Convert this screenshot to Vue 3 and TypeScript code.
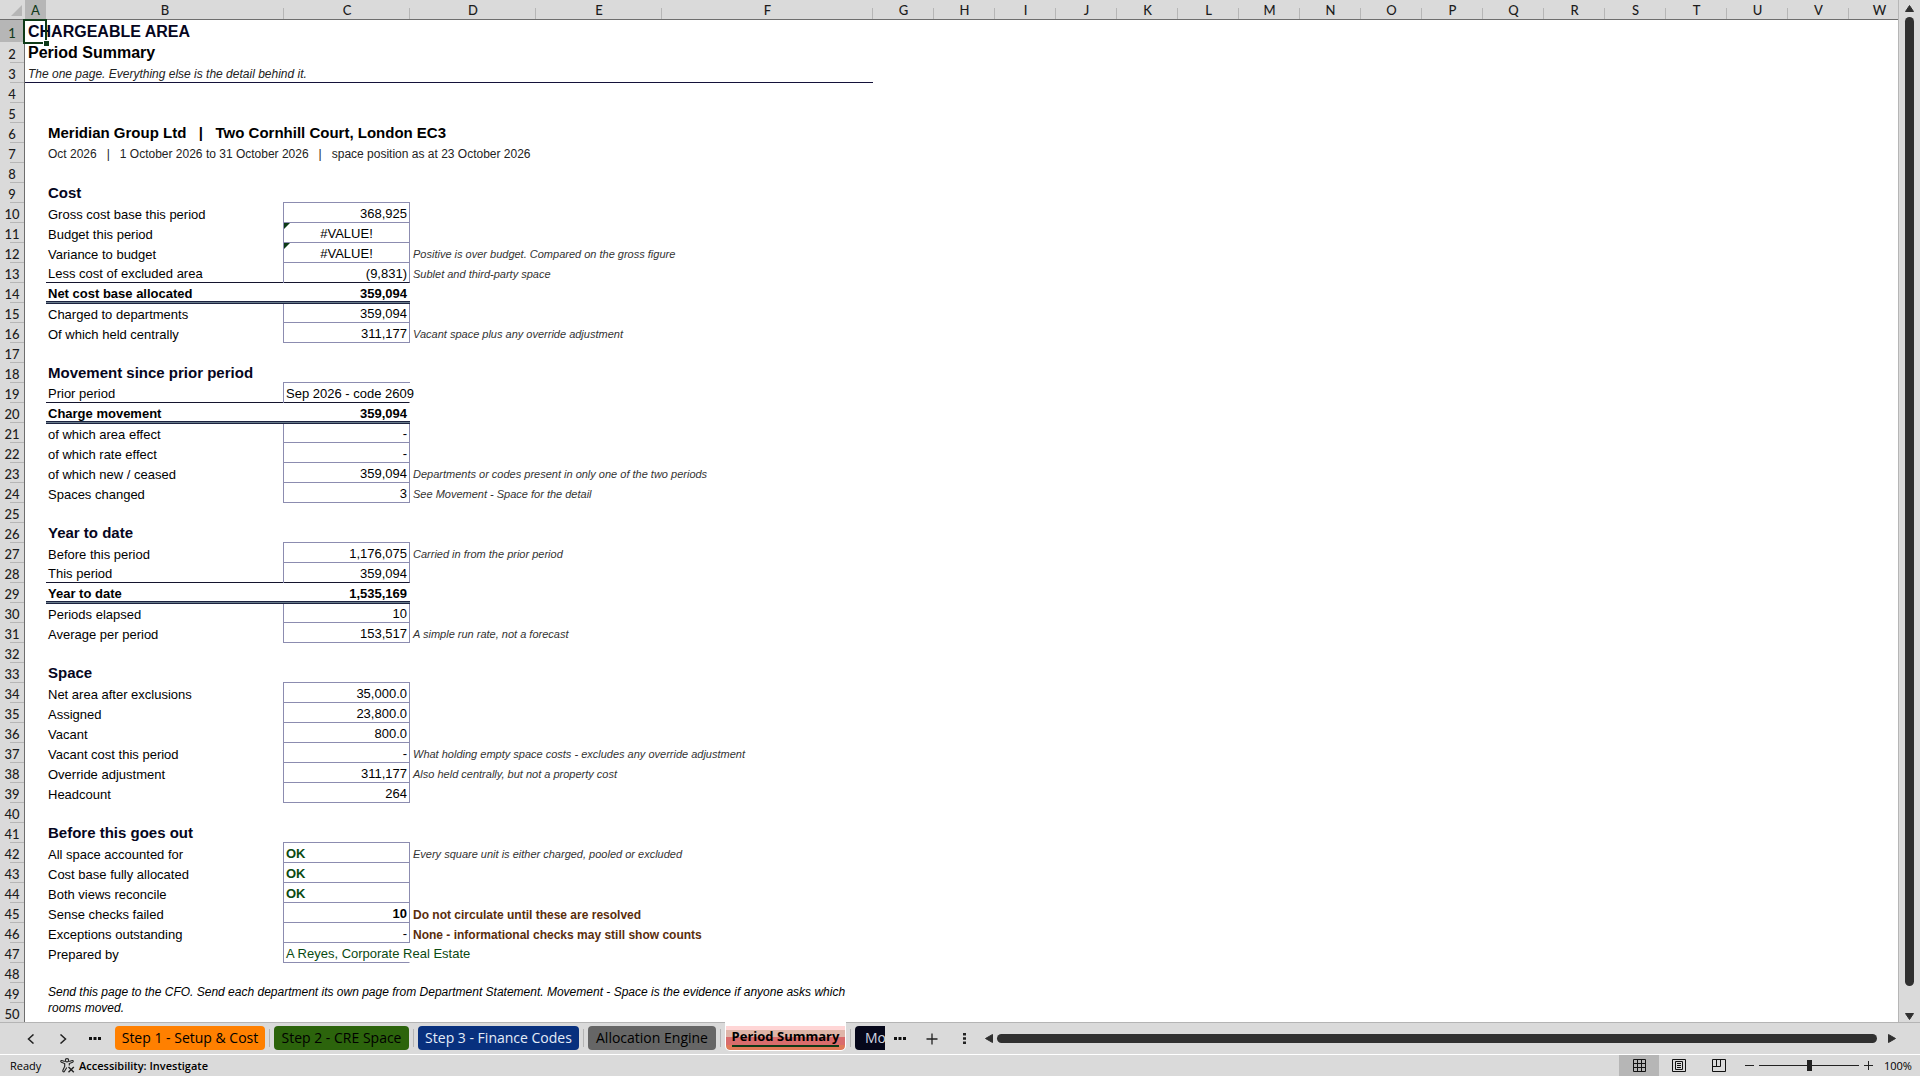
<script setup lang="ts">
interface Row {
  n: number
  kind?: 'title' | 'subtitle' | 'tagline' | 'client' | 'period' | 'section' | 'total' | 'line' | 'closing'
  label?: string
  value?: string
  align?: 'left' | 'center'
  look?: 'ok' | 'link' | 'strong'
  note?: string
  alert?: boolean
  first?: boolean
  open?: boolean
}

const wideColumns = ['D', 'E']
const narrowColumns = 'GHIJKLMNOPQRSTUVW'.split('')

const filled: Row[] = [
  { n: 1, kind: 'title', label: 'CHARGEABLE AREA' },
  { n: 2, kind: 'subtitle', label: 'Period Summary' },
  { n: 3, kind: 'tagline', label: 'The one page. Everything else is the detail behind it.' },
  { n: 6, kind: 'client', label: 'Meridian Group Ltd   |   Two Cornhill Court, London EC3' },
  { n: 7, kind: 'period', label: 'Oct 2026   |   1 October 2026 to 31 October 2026   |   space position as at 23 October 2026' },
  { n: 9, kind: 'section', label: 'Cost' },
  { n: 10, kind: 'line', label: 'Gross cost base this period', value: '368,925', first: true },
  { n: 11, kind: 'line', label: 'Budget this period', value: '#VALUE!', align: 'center' },
  { n: 12, kind: 'line', label: 'Variance to budget', value: '#VALUE!', align: 'center', note: 'Positive is over budget. Compared on the gross figure' },
  { n: 13, kind: 'line', label: 'Less cost of excluded area', value: '(9,831)', note: 'Sublet and third-party space' },
  { n: 14, kind: 'total', label: 'Net cost base allocated', value: '359,094' },
  { n: 15, kind: 'line', label: 'Charged to departments', value: '359,094' },
  { n: 16, kind: 'line', label: 'Of which held centrally', value: '311,177', note: 'Vacant space plus any override adjustment' },
  { n: 18, kind: 'section', label: 'Movement since prior period' },
  { n: 19, kind: 'line', label: 'Prior period', value: 'Sep 2026 - code 2609', align: 'left', first: true, open: true },
  { n: 20, kind: 'total', label: 'Charge movement', value: '359,094' },
  { n: 21, kind: 'line', label: 'of which area effect', value: '-' },
  { n: 22, kind: 'line', label: 'of which rate effect', value: '-' },
  { n: 23, kind: 'line', label: 'of which new / ceased', value: '359,094', note: 'Departments or codes present in only one of the two periods' },
  { n: 24, kind: 'line', label: 'Spaces changed', value: '3', note: 'See Movement - Space for the detail' },
  { n: 26, kind: 'section', label: 'Year to date' },
  { n: 27, kind: 'line', label: 'Before this period', value: '1,176,075', note: 'Carried in from the prior period', first: true },
  { n: 28, kind: 'line', label: 'This period', value: '359,094' },
  { n: 29, kind: 'total', label: 'Year to date', value: '1,535,169' },
  { n: 30, kind: 'line', label: 'Periods elapsed', value: '10' },
  { n: 31, kind: 'line', label: 'Average per period', value: '153,517', note: 'A simple run rate, not a forecast' },
  { n: 33, kind: 'section', label: 'Space' },
  { n: 34, kind: 'line', label: 'Net area after exclusions', value: '35,000.0', first: true },
  { n: 35, kind: 'line', label: 'Assigned', value: '23,800.0' },
  { n: 36, kind: 'line', label: 'Vacant', value: '800.0' },
  { n: 37, kind: 'line', label: 'Vacant cost this period', value: '-', note: 'What holding empty space costs - excludes any override adjustment' },
  { n: 38, kind: 'line', label: 'Override adjustment', value: '311,177', note: 'Also held centrally, but not a property cost' },
  { n: 39, kind: 'line', label: 'Headcount', value: '264' },
  { n: 41, kind: 'section', label: 'Before this goes out' },
  { n: 42, kind: 'line', label: 'All space accounted for', value: 'OK', align: 'left', look: 'ok', note: 'Every square unit is either charged, pooled or excluded', first: true },
  { n: 43, kind: 'line', label: 'Cost base fully allocated', value: 'OK', align: 'left', look: 'ok' },
  { n: 44, kind: 'line', label: 'Both views reconcile', value: 'OK', align: 'left', look: 'ok' },
  { n: 45, kind: 'line', label: 'Sense checks failed', value: '10', look: 'strong', note: 'Do not circulate until these are resolved', alert: true },
  { n: 46, kind: 'line', label: 'Exceptions outstanding', value: '-', note: 'None - informational checks may still show counts', alert: true },
  { n: 47, kind: 'line', label: 'Prepared by', value: 'A Reyes, Corporate Real Estate', align: 'left', look: 'link', open: true },
  {
    n: 49,
    kind: 'closing',
    label:
      'Send this page to the CFO. Send each department its own page from Department Statement. Movement - Space is the evidence if anyone asks which rooms moved.',
  },
]

const rows: Row[] = Array.from({ length: 50 }, (_, i) => filled.find((r) => r.n === i + 1) ?? { n: i + 1 })

const beforeTotal = (n: number) => rows[n]?.kind === 'total'

const tabs = [
  { name: 'Step 1 - Setup & Cost', tone: 'orange' },
  { name: 'Step 2 - CRE Space', tone: 'green' },
  { name: 'Step 3 - Finance Codes', tone: 'blue' },
  { name: 'Allocation Engine', tone: 'grey' },
  { name: 'Period Summary', tone: 'active' },
  { name: 'Mo', tone: 'navy' },
]
</script>

<template>
  <div class="app">
    <main class="work">
      <div class="sheet">
        <table>
          <colgroup>
            <col class="w-head" /><col class="w-a" /><col class="w-b" /><col class="w-c" />
            <col v-for="c in wideColumns" :key="c" class="w-c" />
            <col class="w-f" />
            <col v-for="c in narrowColumns" :key="c" class="w-n" />
          </colgroup>
          <thead>
            <tr>
              <th class="corner"><svg width="11" height="11" viewBox="0 0 11 11"><path d="M11 0V11H0Z" fill="#b6b6b6" /></svg></th>
              <th class="picked" scope="col">A</th>
              <th scope="col">B</th>
              <th scope="col">C</th>
              <th v-for="c in wideColumns" :key="c" scope="col">{{ c }}</th>
              <th scope="col">F</th>
              <th v-for="c in narrowColumns" :key="c" scope="col">{{ c }}</th>
            </tr>
          </thead>
          <tbody>
            <tr v-for="r in rows" :key="r.n" :class="[r.kind, { 'pre-total': beforeTotal(r.n) }]">
              <th scope="row" :class="{ picked: r.n === 1 }">{{ r.n }}</th>
              <template v-if="r.n <= 3">
                <td colspan="6" class="heading">
                  {{ r.label }}
                  <span v-if="r.n === 1" class="cursor"></span>
                </td>
              </template>
              <template v-else-if="r.kind === 'line' || r.kind === 'total'">
                <td></td>
                <td class="label">{{ r.label }}</td>
                <td class="value" :class="[r.align, r.look, { first: r.first, open: r.open }]">
                  <i v-if="r.value === '#VALUE!'" class="flag"></i>{{ r.value }}
                </td>
                <td class="note" :class="{ alert: r.alert }" colspan="3">{{ r.note }}</td>
              </template>
              <template v-else-if="r.kind === 'closing'">
                <td></td>
                <td class="label" colspan="5" rowspan="2">{{ r.label }}</td>
              </template>
              <template v-else-if="r.label">
                <td></td>
                <td class="label" colspan="5">{{ r.label }}</td>
              </template>
            </tr>
          </tbody>
        </table>
      </div>
      <div class="vscroll">
        <svg width="9" height="7" viewBox="0 0 9 7"><path d="M4.5 0.5L8.5 6.5H0.5Z" fill="#303030" stroke="#303030" stroke-linejoin="round" /></svg>
        <div class="thumb"></div>
        <svg width="9" height="7" viewBox="0 0 9 7"><path d="M4.5 6.5L8.5 0.5H0.5Z" fill="#303030" stroke="#303030" stroke-linejoin="round" /></svg>
      </div>
    </main>

    <nav class="tabbar" aria-label="Sheets">
      <div class="arrows">
        <button aria-label="Previous sheet"><svg width="8" height="10" viewBox="0 0 8 10"><path d="M6.5 0.5L1.5 5L6.5 9.5" fill="none" stroke="#222" stroke-width="1.5" /></svg></button>
        <button aria-label="Next sheet"><svg width="8" height="10" viewBox="0 0 8 10"><path d="M1.5 0.5L6.5 5L1.5 9.5" fill="none" stroke="#222" stroke-width="1.5" /></svg></button>
        <button aria-label="More sheets"><svg width="12" height="3" viewBox="0 0 12 3"><path d="M0 0h3v3H0zM4.5 0h3v3h-3zM9 0h3v3H9z" fill="#111" /></svg></button>
      </div>
      <div class="tabs">
        <div v-for="t in tabs" :key="t.name" class="slot" :class="t.tone">
          <button><span>{{ t.name }}</span></button>
        </div>
      </div>
      <div class="tools">
        <button aria-label="All sheets"><svg width="12" height="3" viewBox="0 0 12 3"><path d="M0 0h3v3H0zM4.5 0h3v3h-3zM9 0h3v3H9z" fill="#111" /></svg></button>
        <button aria-label="New sheet"><svg width="12" height="12" viewBox="0 0 12 12"><path d="M6 0.5v11M0.5 6h11" stroke="#222" stroke-width="1.3" /></svg></button>
        <button aria-label="Resize tabs"><svg width="3" height="11" viewBox="0 0 3 11"><path d="M0 0h3v2.5H0zM0 4.25h3v2.5H0zM0 8.5h3V11H0z" fill="#222" /></svg></button>
      </div>
      <div class="hscroll">
        <svg width="8" height="9" viewBox="0 0 8 9"><path d="M0.5 4.5L7.5 0.5V8.5Z" fill="#303030" stroke="#303030" stroke-linejoin="round" /></svg>
        <div class="thumb"></div>
        <svg width="8" height="9" viewBox="0 0 8 9"><path d="M7.5 4.5L0.5 0.5V8.5Z" fill="#303030" stroke="#303030" stroke-linejoin="round" /></svg>
      </div>
    </nav>

    <footer class="status">
      <span class="ready">Ready</span>
      <button class="access">
        <svg width="15" height="15" viewBox="0 0 15 15" fill="none" stroke="#222" stroke-width="1.1">
          <circle cx="7" cy="2.3" r="1.7" />
          <path d="M4.8 3.5L1.8 2.5C0.5 2.3 0.4 3.8 1.4 4.2L4.7 5.6V8.5L2.8 12.5C2.5 14 4 14.3 4.5 13.3L6.8 9.5M9.2 3.5L12.2 2.5C13.5 2.3 13.6 3.8 12.6 4.2L9.3 5.6V7.5" />
          <path d="M8.5 9L13.8 14.3M13.8 9L8.5 14.3" stroke-width="1.4" />
        </svg>
        <span>Accessibility: Investigate</span>
      </button>
      <div class="views">
        <button class="on" aria-label="Normal"><svg width="13" height="13" viewBox="0 0 13 13" fill="none" stroke="#111"><path d="M0.5 0.5h12v12h-12zM4.5 0v13M8.5 0v13M0 4.5h13M0 8.5h13" /></svg></button>
        <button aria-label="Page layout"><svg width="14" height="13" viewBox="0 0 14 13" fill="none" stroke="#111"><path d="M0.5 0.5h13v12h-13zM3.5 2.5h7v8h-7zM5 4.5h4M5 6.5h4M5 8.5h4" /></svg></button>
        <button aria-label="Page break preview"><svg width="14" height="13" viewBox="0 0 14 13" fill="none" stroke="#111"><path d="M0.5 0.5h13v12h-13zM0.5 7.5h8V0.5M4.5 0.5v7" /></svg></button>
      </div>
      <div class="zoom">
        <button aria-label="Zoom out"><svg width="9" height="9" viewBox="0 0 9 9"><path d="M0 4.5h9" stroke="#222" /></svg></button>
        <input type="range" min="10" max="190" value="100" aria-label="Zoom" />
        <button aria-label="Zoom in"><svg width="9" height="9" viewBox="0 0 9 9"><path d="M0 4.5h9M4.5 0v9" stroke="#222" /></svg></button>
        <span class="percent">100%</span>
      </div>
    </footer>
  </div>
</template>

<style>
body {
  margin: 0;
  overflow: hidden;
}
</style>

<style scoped>
.app {
  display: flex;
  flex-direction: column;
  height: 100vh;
  background: #dadada;
  color: #000;
  font-family: 'Open Sans', 'Noto Sans', sans-serif;
}
button {
  display: flex;
  align-items: center;
  justify-content: center;
  padding: 0;
  border: 0;
  background: none;
  color: inherit;
  font: inherit;
}
svg {
  display: block;
  flex: none;
}

.work {
  display: flex;
  flex: 1;
  min-height: 0;
}
.sheet {
  flex: 1;
  min-width: 0;
  overflow: hidden;
  background: linear-gradient(#dadada 20px, #fff 20px);
  border-right: 1px solid #b6b6b6;
}
table {
  width: 1910px;
  table-layout: fixed;
  border-collapse: separate;
  border-spacing: 0;
  font-family: 'Liberation Sans', Arial, sans-serif;
  font-size: 13px;
  line-height: 16px;
}
.w-head { width: 25px; }
.w-a { width: 21px; }
.w-b { width: 238px; }
.w-c { width: 126px; }
.w-f { width: 211px; }
.w-n { width: 61px; }

th {
  box-sizing: border-box;
  padding: 0;
  background: #dadada;
  color: #1c1c1c;
  font-family: Lato, Carlito, sans-serif;
  font-size: 13px;
  font-weight: 500;
  text-align: center;
}
thead th {
  height: 20px;
  padding-bottom: 1px;
  border-bottom: 1px solid #6e6e6e;
  background: linear-gradient(#b6b6b6, #b6b6b6) right bottom / 1px 11px no-repeat #dadada;
  vertical-align: bottom;
}
thead th.corner {
  padding: 0 3px 3px 0;
  background: #dadada;
}
.corner svg {
  margin-left: auto;
}
tbody th {
  padding-bottom: 1px;
  border-right: 1px solid #6e6e6e;
  background: linear-gradient(#b6b6b6, #b6b6b6) right bottom / 14px 1px no-repeat #dadada;
  vertical-align: bottom;
}
thead th.picked,
tbody th.picked {
  background: #b6b6b6;
  color: #123a1c;
}
tbody tr {
  height: 20px;
}
tbody tr.title {
  height: 22px;
}
tbody tr.subtitle {
  height: 21px;
}

td {
  position: relative;
  box-sizing: border-box;
  padding: 0;
  white-space: pre;
  vertical-align: bottom;
}
.heading {
  padding-left: 3px;
  white-space: nowrap;
}
.title td {
  color: #06061e;
  font-size: 16px;
  font-weight: 700;
  line-height: 20px;
}
.subtitle td {
  padding-bottom: 1px;
  font-size: 16px;
  font-weight: 700;
  line-height: 18px;
}
.tagline td {
  border-bottom: 1px solid #14123a;
  color: #222;
  font-size: 12px;
  font-style: italic;
}
.cursor {
  position: absolute;
  top: -1px;
  left: -2px;
  width: 20px;
  height: 21px;
  border: 2px solid #0d3a17;
}
.cursor::after {
  content: '';
  position: absolute;
  right: -4px;
  bottom: -4px;
  width: 5px;
  height: 5px;
  border: 1px solid #fff;
  border-width: 1px 0 0 1px;
  background: #0d3a17;
}
.label {
  padding-left: 2px;
}
.client .label,
.section .label {
  padding-bottom: 2px;
  color: #06061e;
  font-size: 15px;
  font-weight: 700;
}
.client .label {
  color: #000;
}
.period .label {
  padding-bottom: 1px;
  color: #222;
  font-size: 12px;
}
.value {
  padding-right: 2px;
  border-right: 1px solid #8c8cb0;
  border-bottom: 1px solid #8c8cb0;
  text-align: right;
}
.value::before {
  content: '';
  position: absolute;
  top: -1px;
  bottom: -1px;
  left: -1px;
  border-left: 1px solid #8c8cb0;
}
.value.first::after {
  content: '';
  position: absolute;
  top: -1px;
  left: -1px;
  right: -1px;
  border-top: 1px solid #8c8cb0;
}
.value.left {
  padding-left: 2px;
  text-align: left;
}
.value.center {
  padding-right: 0;
  text-align: center;
}
.value.open {
  border-right-color: transparent;
}
.value.ok {
  color: #0b4a12;
  font-weight: 700;
}
.value.link {
  color: #0b4a12;
}
.value.strong {
  font-weight: 700;
}
.flag {
  position: absolute;
  top: 0;
  left: 0;
  border-top: 6px solid #0d3a17;
  border-right: 6px solid transparent;
}
.pre-total .label,
.pre-total .value {
  border-bottom: 1px solid #14142e;
}
.total td {
  font-weight: 700;
}
.total .value {
  padding-right: 3px;
  padding-bottom: 1px;
  border: 0;
}
.total .label {
  padding-bottom: 1px;
}
.total .value::before {
  display: none;
}
.total .label::after,
.total .value::after {
  content: '';
  position: absolute;
  z-index: 1;
  left: 0;
  right: 0;
  bottom: -1px;
  height: 1px;
  border: solid #1d2440;
  border-width: 1px 0;
  background: #6a7c8c;
}
.note {
  padding-left: 3px;
  padding-bottom: 2px;
  color: #333;
  font-size: 11px;
  font-style: italic;
  line-height: 14px;
}
.note.alert {
  padding-bottom: 0;
  color: #5a2d0c;
  font-size: 12px;
  font-style: normal;
  font-weight: 700;
  line-height: 16px;
}
.closing .label {
  padding-top: 1px;
  font-size: 12px;
  font-style: italic;
  white-space: normal;
  vertical-align: top;
}

.vscroll {
  display: flex;
  flex-direction: column;
  align-items: center;
  width: 21px;
  padding: 5px 0 2px;
}
.vscroll .thumb {
  flex: 1;
  width: 9px;
  margin: 5px 0 27px;
}
.thumb {
  border-radius: 5px;
  background: #303030;
}

.tabbar {
  display: flex;
  align-items: center;
  height: 31px;
  border-top: 1px solid #b4b4b4;
  border-bottom: 1px solid #fff;
}
.arrows {
  display: flex;
  width: 115px;
  padding-left: 15px;
  box-sizing: border-box;
}
.arrows button,
.tools button {
  width: 32px;
  height: 24px;
}
.tabs {
  display: flex;
  width: 770px;
  margin-top: -1px;
  overflow: hidden;
  font-size: 14px;
}
.slot {
  display: flex;
  flex: none;
  align-items: center;
  height: 32px;
}
.slot::after {
  content: '';
  width: 1px;
  height: 18px;
  margin: 0 4px;
  background: #b4b4b4;
}
.slot button {
  height: 24px;
  padding-bottom: 1px;
  border-radius: 4px;
  white-space: nowrap;
}
.orange button { width: 150px; background: #ff8000; }
.green button { width: 135px; background: #2c640c; }
.blue button { width: 161px; background: #08307e; color: #e4ecf8; }
.grey button { width: 128px; background: #666; }
.navy button { width: 90px; background: #05071a; color: #d0d4e0; justify-content: flex-start; padding-left: 10px; }
.slot.active button {
  align-self: flex-start;
  width: 121px;
  height: 29px;
  padding-bottom: 2px;
  border: solid #fff;
  border-width: 4px 1px 1px;
  border-radius: 0 0 5px 5px;
  background: linear-gradient(#ffd6d6 0 4px, #dfb5a8 4px 11px, #d96c6c 11px 19px, #e07a58 19px) padding-box;
  font-weight: 700;
  font-size: 13px;
}
.active span {
  border-bottom: 2px solid #0d3a17;
  line-height: 18px;
}
.tools {
  display: flex;
  width: 98px;
  margin-left: -1px;
}
.hscroll {
  display: flex;
  flex: 1;
  align-items: center;
  margin: 0 24px 0 3px;
}
.hscroll .thumb {
  flex: 1;
  height: 9px;
  margin: 0 11px 0 4px;
}

.status {
  display: flex;
  align-items: center;
  height: 21px;
  font-size: 11px;
}
.ready {
  width: 50px;
  padding-left: 10px;
}
.access {
  gap: 4px;
  font-weight: 600;
}
.views {
  display: flex;
  margin-right: 6px;
  margin-left: auto;
}
.views button {
  width: 40px;
  height: 21px;
}
.views .on {
  background: #b6b6b6;
}
.zoom {
  display: flex;
  align-items: center;
  gap: 5px;
  padding-right: 8px;
}
input[type='range'] {
  appearance: none;
  width: 100px;
  height: 11px;
  margin: 0;
  background: linear-gradient(#222, #222) center / 100% 1px no-repeat;
}
input[type='range']::-webkit-slider-thumb {
  appearance: none;
  width: 5px;
  height: 11px;
  background: #222;
}
.percent {
  width: 28px;
  margin-left: 6px;
}
</style>
